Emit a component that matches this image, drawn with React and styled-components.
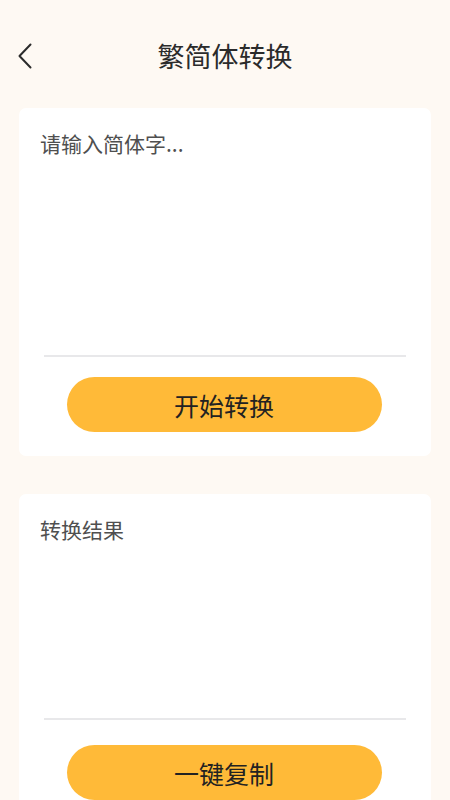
import React from "react";
import styled, { createGlobalStyle } from "styled-components";

const Global = createGlobalStyle`
  html, body { margin: 0; padding: 0; background: #fef9f3; }
  body { font-family: "Noto Sans CJK SC", "Noto Sans", sans-serif; }
  * { box-sizing: border-box; }
`;

const Page = styled.div`
  width: 450px;
  height: 800px;
  overflow: hidden;
  background: #fef9f3;
  padding: 0 19px;
`;

const Header = styled.header`
  height: 48px;
  margin: 32px -19px 0;
  display: grid;
  grid-template-columns: 40px 1fr 40px;
  align-items: center;
  padding: 0 12px;
`;

const Back = styled.button`
  width: 26px;
  height: 32px;
  border: 0;
  background: none;
  padding: 0;
  display: flex;
  align-items: center;
  justify-content: center;
`;

const Title = styled.h1`
  margin: 0;
  text-align: center;
  font-size: 27px;
  font-weight: 400;
  color: #2b2b2b;
  line-height: 48px;
`;

const Card = styled.section`
  background: #ffffff;
  border-radius: 7px;
  margin-top: ${(p) => p.$top}px;
  padding: 21px 0 24px;
  display: flex;
  flex-direction: column;
`;

const Area = styled.div`
  height: ${(p) => p.$h}px;
  margin: 0 25px;
  border-bottom: 2px solid #e8e8ea;
`;

const Placeholder = styled.div`
  font-size: 21px;
  line-height: 28px;
  color: #4f4f4f;
  margin-left: -4px;
`;

const Action = styled.button`
  align-self: center;
  margin: ${(p) => p.$gap}px 0 0 -2px;
  width: 315px;
  height: 55px;
  border: 0;
  border-radius: 28px;
  background: #ffba38;
  color: #222222;
  font-family: "Noto Sans CJK SC", "Noto Sans", sans-serif;
  font-size: 25px;
  padding: 0;
  display: flex;
  align-items: center;
  justify-content: center;
`;

export default function App() {
  return (
    <>
      <Global />
      <Page>
        <Header>
          <Back aria-label="返回">
            <svg width="16" height="26" viewBox="0 0 16 26" fill="none">
              <path d="M13.5 1.5 L2.5 13 L13.5 24.5" stroke="#2b2b2b" strokeWidth="2" strokeLinecap="round" strokeLinejoin="round" />
            </svg>
          </Back>
          <Title>繁简体转换</Title>
          <span />
        </Header>
        <Card $top={28}>
          <Area $h={228}>
            <Placeholder>请输入简体字...</Placeholder>
          </Area>
          <Action $gap={20}>开始转换</Action>
        </Card>
        <Card $top={38}>
          <Area $h={205}>
            <Placeholder>转换结果</Placeholder>
          </Area>
          <Action $gap={25}>一键复制</Action>
        </Card>
      </Page>
    </>
  );
}
